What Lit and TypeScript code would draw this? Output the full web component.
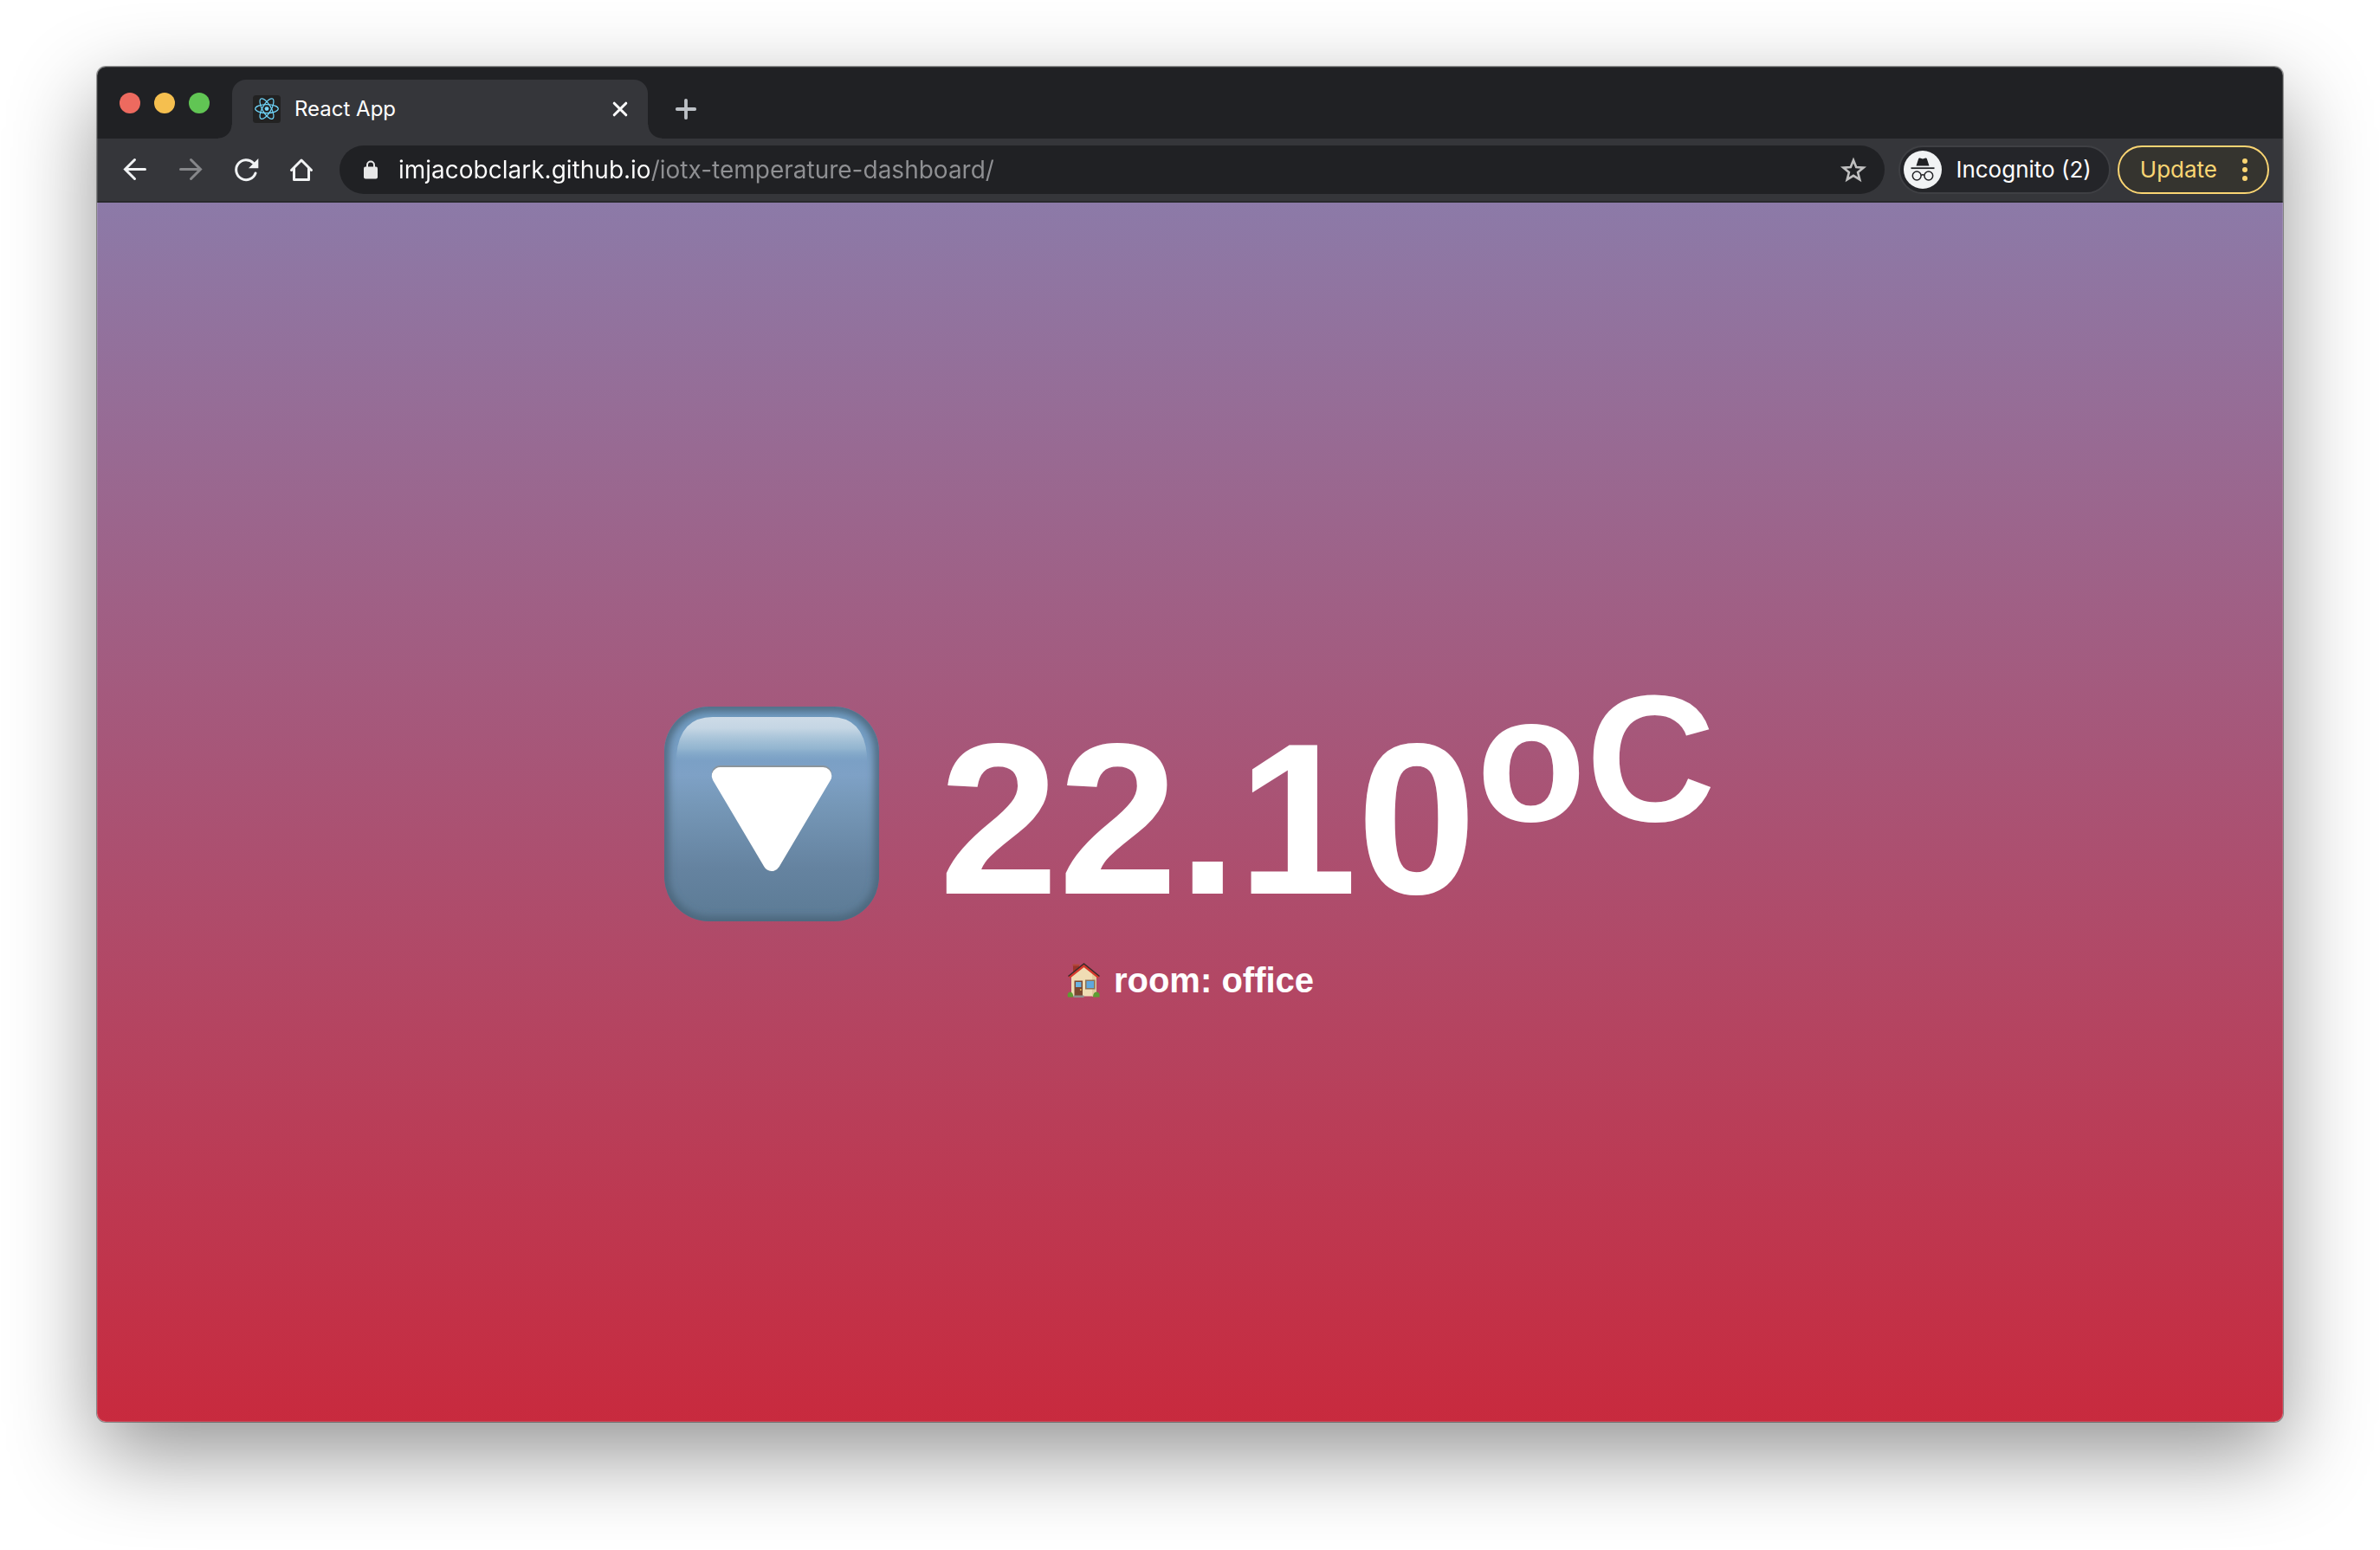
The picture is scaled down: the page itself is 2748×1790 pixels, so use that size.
import { LitElement, html, css, svg } from "lit";
import { customElement, property } from "lit/decorators.js";

const backIcon = svg`<svg class="icon" viewBox="0 0 32 32" aria-hidden="true">
  <path d="M27.500 15.500H5M15.500 4.500l-11 11 11 11" fill="none" stroke="currentColor" stroke-width="3" stroke-linecap="round" stroke-linejoin="miter"/></svg>`;
const forwardIcon = svg`<svg class="icon" viewBox="0 0 32 32" aria-hidden="true">
  <path d="M4.500 15.500H27M16.500 4.500l11 11-11 11" fill="none" stroke="currentColor" stroke-width="3" stroke-linecap="round"/></svg>`;
const reloadIcon = svg`<svg class="icon" viewBox="0 0 32 32" aria-hidden="true">
  <path d="M27 20A11.500 11.500 0 1 1 24.500 8.200" fill="none" stroke="currentColor" stroke-width="3" stroke-linecap="round"/>
  <path d="M30.300 3v11.200H19z" fill="currentColor"/></svg>`;
const homeIcon = svg`<svg class="icon" viewBox="0 0 32 32" aria-hidden="true">
  <path d="M4.500 16.500 16 5l11.500 11.500M7.500 14v13.500h17V14" fill="none" stroke="currentColor" stroke-width="3" stroke-linecap="round" stroke-linejoin="round"/></svg>`;
const lockIcon = svg`<svg class="lock" viewBox="0 0 16 22" aria-hidden="true">
  <path d="M4 9V5.500a4 4 0 0 1 8 0V9" fill="none" stroke="#e8e8e8" stroke-width="2"/>
  <rect y="7.500" width="16" height="14" rx="2" fill="#e8e8e8"/></svg>`;
const starIcon = svg`<svg class="icon" viewBox="0 0 32 32" aria-hidden="true">
  <path d="M16 5l3.200 8 8.500.600-6.600 5.400 2.200 8.400L16 22.800l-7.300 4.600 2.200-8.400-6.600-5.400 8.500-.600z" fill="none" stroke="#c0c0c0" stroke-width="2.600"/></svg>`;
const closeIcon = svg`<svg class="icon" viewBox="0 0 32 32" aria-hidden="true">
  <path d="M9.200 9.200l13.600 13.600M22.800 9.200 9.200 22.800" stroke="#fff" stroke-width="3" stroke-linecap="round"/></svg>`;
const plusIcon = svg`<svg class="icon" viewBox="0 0 32 32" aria-hidden="true">
  <path d="M16 5.800v20.400M5.800 16h20.400" stroke="#bdc1c6" stroke-width="3.800" stroke-linecap="round"/></svg>`;
const incognitoIcon = svg`<svg class="avatar" viewBox="0 0 44 44" aria-hidden="true">
  <circle cx="22" cy="22" r="22" fill="#f1f3f4"/>
  <path d="M14.500 17.500 17.200 9.300q.400-1 1.500-.700l3.300.900 3.300-.900q1.100-.300 1.500.700l2.700 8.200z" fill="#202124"/>
  <path d="M8.500 20.200h27" stroke="#202124" stroke-width="1.800"/>
  <g fill="none" stroke="#202124" stroke-width="1.500"><circle cx="15.200" cy="29" r="4.900"/><circle cx="28.800" cy="29" r="4.900"/>
  <path d="M20 28.500q2-1.400 4 0"/></g></svg>`;
const moreIcon = svg`<svg class="more" viewBox="0 0 8 28" aria-hidden="true" fill="currentColor">
  <circle cx="4" cy="4" r="3"/><circle cx="4" cy="14" r="3"/><circle cx="4" cy="24" r="3"/></svg>`;
const reactIcon = svg`<svg class="icon" viewBox="0 0 32 32" aria-hidden="true">
  <rect width="32" height="32" rx="3.500" fill="#222"/>
  <circle cx="16" cy="15.600" r="2.400" fill="#7ad8fb"/>
  <g fill="none" stroke="#6fd6fb" stroke-width="1.200"><ellipse cx="16" cy="15.600" rx="13.300" ry="5"/>
  <ellipse cx="16" cy="15.600" rx="13.300" ry="5" transform="rotate(60 16 15.600)"/>
  <ellipse cx="16" cy="15.600" rx="13.300" ry="5" transform="rotate(120 16 15.600)"/></g></svg>`;

const trendDown = svg`<svg class="trend" viewBox="0 0 248 248" role="img" aria-label="falling">
  <defs>
    <linearGradient id="face" x2="0" y2="1"><stop offset="0" stop-color="#6f9cc2"/><stop offset=".320" stop-color="#7ea1c6"/>
      <stop offset=".450" stop-color="#7698b8"/><stop offset=".750" stop-color="#6583a0"/><stop offset="1" stop-color="#5c7b95"/></linearGradient>
    <linearGradient id="gloss" x2="0" y2="1"><stop offset="0" stop-color="#cddbe7"/><stop offset=".250" stop-color="#c5d6e4"/>
      <stop offset=".700" stop-color="#9fbfd5" stop-opacity=".700"/><stop offset="1" stop-color="#82a8c8" stop-opacity="0"/></linearGradient>
    <clipPath id="key"><rect width="248" height="248" rx="52"/></clipPath>
    <filter id="soft"><feGaussianBlur stdDeviation="5"/></filter>
  </defs>
  <g clip-path="url(#key)">
    <rect width="248" height="248" fill="url(#face)"/>
    <rect width="248" height="248" rx="52" fill="none" stroke="#486478" stroke-width="10" filter="url(#soft)"/>
    <path d="M14 64V56Q18 12 56 12H192Q230 12 234 56V64z" fill="url(#gloss)"/>
  </g>
  <path d="M64.700 78h118.600L124 180z" fill="#8b949b" stroke="#8b949b" stroke-width="20" stroke-linejoin="round"/>
  <path d="M64.700 80h118.600L124 180z" fill="#fff" stroke="#fff" stroke-width="20" stroke-linejoin="round"/></svg>`;

const house = svg`<svg class="house" viewBox="0 0 44 44" aria-hidden="true">
  <path d="M8 4h7v11H8z" fill="#9c3328"/><path d="M7.500 3.500h8v2h-8z" fill="#b5483a"/>
  <path d="M6 18 20.500 5.500 35 18v22.500H6z" fill="#f0dcb4"/>
  <path d="M30 14l5 4v22.500h-5z" fill="#e2cb9e"/>
  <path d="M3.500 18.500 20.500 5l17 13.500" fill="none" stroke="#d6392c" stroke-width="3.200"/>
  <path d="M2.500 17.500 20.500 3l18 14.500" fill="none" stroke="#3b2b2b" stroke-width="1.600"/>
  <path d="M9.500 22.500h9.500V40H9.500z" fill="#7b4630"/><path d="M11 24h6.500v6H11z" fill="#6bb2e0"/>
  <circle cx="16.800" cy="33" r="1" fill="#e3b34b"/>
  <path d="M22 21.500h11.500v11H22z" fill="#8b7358"/><path d="M23.500 23h8.500v8h-8.500z" fill="#5fa8de"/>
  <path d="M8.500 39.500h12V42h-12z" fill="#8e8e8e"/>
  <path d="M2 41.500q-1.500-5 2.500-6 4 .500 3.500 6zM31 41.500q0-5.500 4-6 4.500.500 3.500 6z" fill="#5d9c33"/></svg>`;

@customElement("browser-tabs")
class BrowserTabs extends LitElement {
  @property() label = "";

  static styles = css`
    :host { display: block; background: #202124; color: #fff; font: 400 24px/32px Inter, "Liberation Sans", sans-serif; }
    button { border: 0; padding: 0; background: none; color: inherit; font: inherit; }
    .strip { display: flex; align-items: flex-end; gap: 26px; padding: 15px 26px 0; }
    .lights { display: flex; gap: 16px; height: 82px; align-items: center; margin-top: -16px; }
    .light { width: 24px; height: 24px; border-radius: 50%; }
    .close { background: #ed6a5f; }
    .minimise { background: #f5bf4f; }
    .zoom { background: #61c554; }
    .tabs { display: flex; height: 68px; }
    .tab { position: relative; display: flex; align-items: center; gap: 16px; width: 480px; box-sizing: border-box; padding: 0 16px 0 24px; border-radius: 16px 16px 0 0; background: #35363a; }
    .tab::before, .tab::after { content: ""; position: absolute; bottom: 0; width: 16px; height: 16px; }
    .tab::before { right: 100%; background: radial-gradient(circle at 0 0, #202124 15px, #35363a 16px); }
    .tab::after { left: 100%; background: radial-gradient(circle at 100% 0, #202124 15px, #35363a 16px); }
    .title { flex: 1; text-align: left; }
    .add { width: 88px; display: grid; place-items: center; }
    .icon { display: block; width: 32px; height: 32px; }
  `;

  render() {
    return html`<div class="strip">
      <div class="lights">
        <button class="light close" aria-label="Close window"></button>
        <button class="light minimise" aria-label="Minimise window"></button>
        <button class="light zoom" aria-label="Zoom window"></button>
      </div>
      <div class="tabs">
        <div class="tab">${reactIcon}<span class="title">${this.label}</span>
          <button aria-label="Close tab">${closeIcon}</button></div>
        <button class="add" aria-label="New tab">${plusIcon}</button>
      </div>
    </div>`;
  }
}

@customElement("browser-toolbar")
class BrowserToolbar extends LitElement {
  @property() url = "";

  static styles = css`
    :host { display: block; background: #35363a; border-bottom: 2px solid #28292c; color: #fff; font: 400 28px/36px Inter, "Liberation Sans", sans-serif; }
    button { border: 0; padding: 0; background: none; color: inherit; font: inherit; }
    .bar { display: flex; align-items: center; gap: 8px; padding: 8px 16px; }
    .nav { display: flex; gap: 8px; padding-right: 8px; }
    .tool { width: 56px; height: 56px; display: grid; place-items: center; color: #f1f3f4; }
    .tool:disabled { color: #86878a; }
    .icon { display: block; width: 32px; height: 32px; }
    .omnibox { flex: 1; display: flex; align-items: center; gap: 24px; height: 56px; box-sizing: border-box; margin-right: 8px; padding: 0 20px 0 28px; border-radius: 28px; background: #202124; }
    .lock { width: 16px; height: 22px; }
    .url { flex: 1; min-width: 0; height: 40px; border: 0; padding: 0; outline: 0; font: inherit; color: transparent;
      background: linear-gradient(90deg, #fff 290px, #8f9093 290px); background-clip: text; -webkit-background-clip: text; }
    .chip { display: flex; align-items: center; height: 56px; box-sizing: border-box; border: 2px solid #3f4044; border-radius: 28px; font-size: 26px; }
    .profile { gap: 16px; padding: 0 20px 0 4px; background: #242529; }
    .avatar { width: 44px; height: 44px; }
    .update { gap: 28px; padding: 0 22px 0 24px; border-color: #fad573; background: #35342f; color: #fad573; }
    .more { width: 8px; height: 28px; }
  `;

  render() {
    return html`<div class="bar">
      <div class="nav">
        <button class="tool" aria-label="Back">${backIcon}</button>
        <button class="tool" aria-label="Forward" disabled>${forwardIcon}</button>
        <button class="tool" aria-label="Reload">${reloadIcon}</button>
        <button class="tool" aria-label="Home">${homeIcon}</button>
      </div>
      <div class="omnibox">${lockIcon}
        <input class="url" aria-label="Address" spellcheck="false" .value=${this.url}>
        <button aria-label="Bookmark">${starIcon}</button>
      </div>
      <button class="chip profile">${incognitoIcon}<span>Incognito (2)</span></button>
      <button class="chip update"><span>Update</span>${moreIcon}</button>
    </div>`;
  }
}

@customElement("temperature-dashboard")
class TemperatureDashboard extends LitElement {
  @property() reading = "";
  @property() room = "";

  static styles = css`
    :host { display: flex; flex-direction: column; align-items: center; justify-content: center; box-sizing: border-box; padding-top: 96px;
      background: linear-gradient(#8c7aa8, #c82a3e); color: #fff; font-family: "Liberation Sans", Arial, sans-serif; }
    h1, h2 { margin: 0; font-weight: 700; }
    h1 { font-size: 248px; line-height: 248px; white-space: nowrap; }
    sup { font-size: 207px; line-height: 0; vertical-align: super; }
    .trend { width: 248px; height: 248px; vertical-align: -32px; }
    h2 { display: flex; align-items: center; gap: 11px; margin-top: 38px; font-size: 40px; line-height: 48px; }
    .house { width: 44px; height: 44px; }
  `;

  render() {
    return html`<h1>${trendDown} ${this.reading}<sup>oC</sup></h1>
      <h2>${house}<span>room: ${this.room}</span></h2>`;
  }
}

@customElement("app-root")
class AppRoot extends LitElement {
  static styles = css`
    :host { display: flex; min-height: 100vh; box-sizing: border-box; padding: 77px 112px 148px; background: #fff; }
    .window { position: relative; flex: 1; min-width: 0; display: flex; flex-direction: column; border-radius: 10px;
      box-shadow: 0 0 0 1px rgba(0, 0, 0, 0.35), 0 36px 100px rgba(0, 0, 0, 0.43); }
    .window::after { content: ""; position: absolute; inset: 0; border-radius: inherit; box-shadow: inset 0 0 0 1px rgba(255, 255, 255, 0.14); pointer-events: none; }
    browser-tabs { border-radius: 10px 10px 0 0; }
    temperature-dashboard { flex: 1; border-radius: 0 0 10px 10px; }
  `;

  render() {
    return html`<main class="window">
      <browser-tabs label="React App"></browser-tabs>
      <browser-toolbar url="imjacobclark.github.io/iotx-temperature-dashboard/"></browser-toolbar>
      <temperature-dashboard reading="22.10" room="office"></temperature-dashboard>
    </main>`;
  }
}
